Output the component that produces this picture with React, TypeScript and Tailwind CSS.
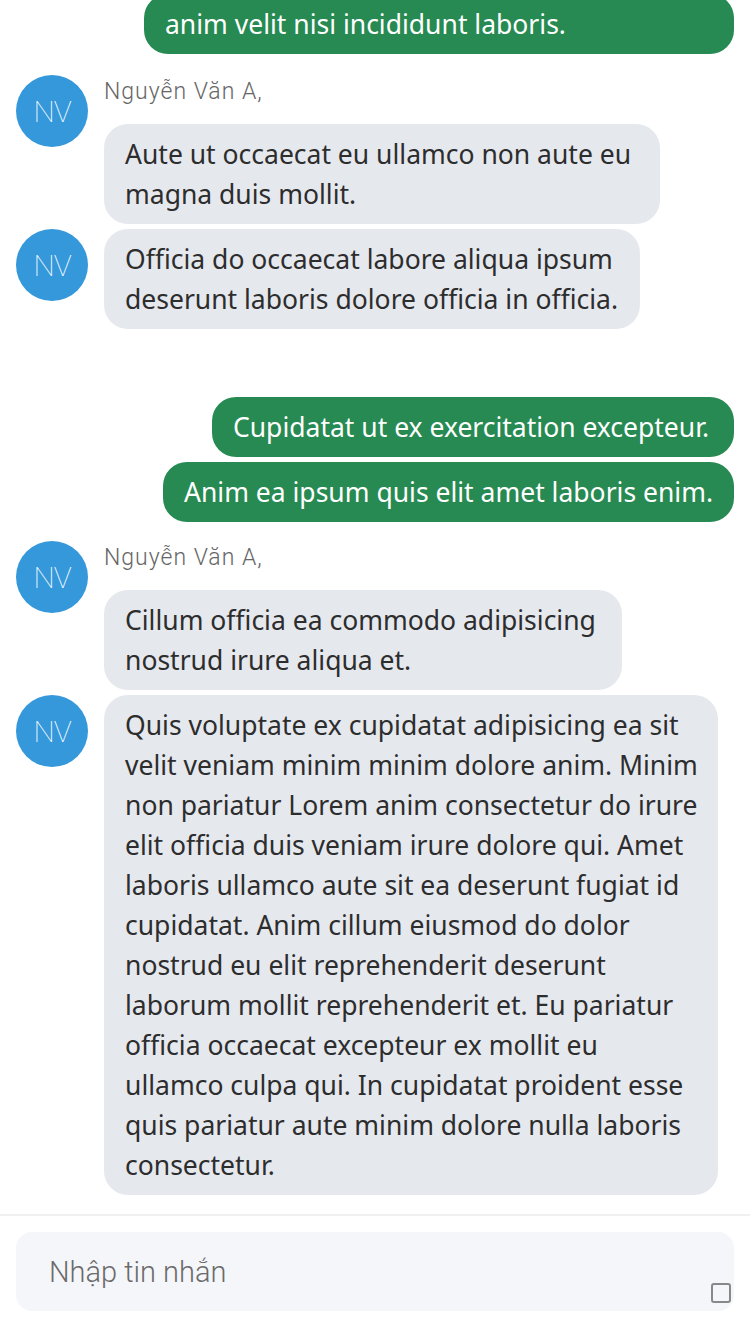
import React from 'react';

const textCls = "text-[26.5px] leading-[40px] font-['Noto_Sans',sans-serif] whitespace-nowrap";

function Avatar() {
  return (
    <div className="w-[72px] h-[72px] shrink-0 rounded-full bg-[#3498db] flex items-center justify-center">
      <span className="text-white text-[30px] font-thin font-['Roboto',sans-serif] tracking-[-1px]">NV</span>
    </div>
  );
}

function MyBubble({ width, lines }: { width: number; lines: string[] }) {
  return (
    <div className="flex justify-end pr-4">
      <div
        style={{ width }}
        className={`bg-[#268a52] text-white rounded-[24px] px-[21px] py-[10px] ${textCls}`}
      >
        {lines.map((l, i) => (
          <div key={i}>{l}</div>
        ))}
      </div>
    </div>
  );
}

function TheirBubble({ width, lines, showAvatar, showName }: { width: number; lines: string[]; showAvatar: boolean; showName: boolean }) {
  return (
    <div className="flex pl-4 gap-4">
      <div className="w-[72px] shrink-0">{showAvatar && <Avatar />}</div>
      <div className="flex flex-col">
        {showName && (
          <div className="text-[23px] leading-[34px] text-[#666] font-light font-['Roboto',sans-serif] mb-[15px] tracking-[1px]">
            Nguyễn Văn A,
          </div>
        )}
        <div
          style={{ width }}
          className={`bg-[#e5e8ed] text-[#2d2d2d] rounded-[24px] px-[21px] py-[10px] ${textCls}`}
        >
          {lines.map((l, i) => (
            <div key={i}>{l}</div>
          ))}
        </div>
      </div>
    </div>
  );
}

export default function App() {
  return (
    <div className="w-[750px] h-[1334px] bg-white overflow-hidden flex flex-col">
      <div className="flex-1 overflow-hidden">
        {/* top (scrolled) outgoing message */}
        <div className="mt-[-6px]">
          <MyBubble width={590} lines={['anim velit nisi incididunt laboris.']} />
        </div>

        <div className="mt-[21px] flex flex-col gap-[5px]">
          <TheirBubble
            showAvatar
            showName
            width={556}
            lines={['Aute ut occaecat eu ullamco non aute eu', 'magna duis mollit.']}
          />
          <TheirBubble
            showAvatar
            showName={false}
            width={536}
            lines={['Officia do occaecat labore aliqua ipsum', 'deserunt laboris dolore officia in officia.']}
          />
        </div>

        <div className="mt-[68px] flex flex-col gap-[5px]">
          <MyBubble width={522} lines={['Cupidatat ut ex exercitation excepteur.']} />
          <MyBubble width={571} lines={['Anim ea ipsum quis elit amet laboris enim.']} />
        </div>

        <div className="mt-[19px] flex flex-col gap-[5px]">
          <TheirBubble
            showAvatar
            showName
            width={518}
            lines={['Cillum officia ea commodo adipisicing', 'nostrud irure aliqua et.']}
          />
          <TheirBubble
            showAvatar
            showName={false}
            width={614}
            lines={[
              'Quis voluptate ex cupidatat adipisicing ea sit',
              'velit veniam minim minim dolore anim. Minim',
              'non pariatur Lorem anim consectetur do irure',
              'elit officia duis veniam irure dolore qui. Amet',
              'laboris ullamco aute sit ea deserunt fugiat id',
              'cupidatat. Anim cillum eiusmod do dolor',
              'nostrud eu elit reprehenderit deserunt',
              'laborum mollit reprehenderit et. Eu pariatur',
              'officia occaecat excepteur ex mollit eu',
              'ullamco culpa qui. In cupidatat proident esse',
              'quis pariatur aute minim dolore nulla laboris',
              'consectetur.',
            ]}
          />
        </div>
      </div>

      {/* Composer */}
      <div className="h-[120px] shrink-0 border-t-2 border-[#f0f0f0] px-4 pt-[16px]">
        <div className="h-[79px] rounded-[16px] bg-[#f5f6fa] flex">
          <div className="flex-1 pl-[33px] pt-[22px] text-[29px] leading-[36px] text-[#6b6b6b] font-light font-['Roboto',sans-serif]">
            Nhập tin nhắn
          </div>
          <div className="flex items-end pb-[8px] pr-[3px]">
            <div className="w-[20px] h-[20px] rounded-[3px] border-2 border-[#888]" />
          </div>
        </div>
      </div>
    </div>
  );
}
